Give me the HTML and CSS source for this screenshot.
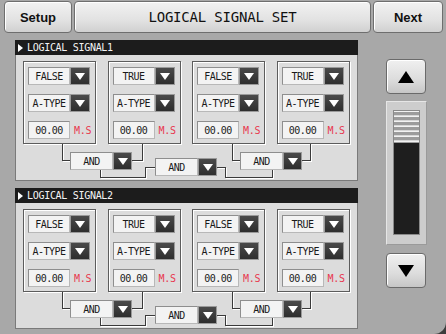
FILE: index.html
```html
<!DOCTYPE html>
<html lang="en">
<head>
    <meta charset="UTF-8">
    <meta name="viewport" content="width=device-width, initial-scale=1.0">
    <title>Logical Signal Set</title>
    <link rel="stylesheet" href="styles.css">
</head>
<body>
    <div id="screen">
        <div class="topbar">
            <button class="side-btn setup">Setup</button>
            <div class="title">LOGICAL SIGNAL SET</div>
            <button class="side-btn next">Next</button>
        </div>

        <div class="main">
            <div class="panels">
                <div class="panel">
                    <div class="panel-head"><span class="arrow"></span>LOGICAL SIGNAL1</div>
                    <div class="panel-body">
                        <div class="cards">
                            <div class="card">
                                <div class="select"><span class="field">FALSE</span><span class="drop"></span></div>
                                <div class="select"><span class="field">A-TYPE</span><span class="drop"></span></div>
                                <div class="time"><span class="field">00.00</span><span class="unit">M.S</span></div>
                            </div>
                            <div class="card">
                                <div class="select"><span class="field">TRUE</span><span class="drop"></span></div>
                                <div class="select"><span class="field">A-TYPE</span><span class="drop"></span></div>
                                <div class="time"><span class="field">00.00</span><span class="unit">M.S</span></div>
                            </div>
                            <div class="card">
                                <div class="select"><span class="field">FALSE</span><span class="drop"></span></div>
                                <div class="select"><span class="field">A-TYPE</span><span class="drop"></span></div>
                                <div class="time"><span class="field">00.00</span><span class="unit">M.S</span></div>
                            </div>
                            <div class="card">
                                <div class="select"><span class="field">TRUE</span><span class="drop"></span></div>
                                <div class="select"><span class="field">A-TYPE</span><span class="drop"></span></div>
                                <div class="time"><span class="field">00.00</span><span class="unit">M.S</span></div>
                            </div>
                        </div>
                        <div class="logic">
                            <svg class="wires" width="342" height="36">
                                <g class="hi">
                                    <path d="M47.5,0 V17.5 H55 M127.5,0 V17.5 H117 M85.5,26 V34.5 H130.5 V24.5 H139 M202,24.5 H210.5 V34.5 H257.5 V26 M217.5,0 V17.5 H225 M295.5,0 V17.5 H287"/>
                                </g>
                                <g class="lo">
                                    <path d="M46.5,0 V16.5 H54 M126.5,0 V16.5 H116 M84.5,26 V33.5 H129.5 V23.5 H139 M201,23.5 H209.5 V33.5 H256.5 V26 M216.5,0 V16.5 H224 M294.5,0 V16.5 H286"/>
                                </g>
                            </svg>
                            <div class="gate g1"><span class="field">AND</span><span class="drop"></span></div>
                            <div class="gate g2"><span class="field">AND</span><span class="drop"></span></div>
                            <div class="gate g3"><span class="field">AND</span><span class="drop"></span></div>
                        </div>
                    </div>
                </div>

                <div class="panel">
                    <div class="panel-head"><span class="arrow"></span>LOGICAL SIGNAL2</div>
                    <div class="panel-body">
                        <div class="cards">
                            <div class="card">
                                <div class="select"><span class="field">FALSE</span><span class="drop"></span></div>
                                <div class="select"><span class="field">A-TYPE</span><span class="drop"></span></div>
                                <div class="time"><span class="field">00.00</span><span class="unit">M.S</span></div>
                            </div>
                            <div class="card">
                                <div class="select"><span class="field">TRUE</span><span class="drop"></span></div>
                                <div class="select"><span class="field">A-TYPE</span><span class="drop"></span></div>
                                <div class="time"><span class="field">00.00</span><span class="unit">M.S</span></div>
                            </div>
                            <div class="card">
                                <div class="select"><span class="field">FALSE</span><span class="drop"></span></div>
                                <div class="select"><span class="field">A-TYPE</span><span class="drop"></span></div>
                                <div class="time"><span class="field">00.00</span><span class="unit">M.S</span></div>
                            </div>
                            <div class="card">
                                <div class="select"><span class="field">TRUE</span><span class="drop"></span></div>
                                <div class="select"><span class="field">A-TYPE</span><span class="drop"></span></div>
                                <div class="time"><span class="field">00.00</span><span class="unit">M.S</span></div>
                            </div>
                        </div>
                        <div class="logic">
                            <svg class="wires" width="342" height="36">
                                <g class="hi">
                                    <path d="M47.5,0 V17.5 H55 M127.5,0 V17.5 H117 M85.5,26 V34.5 H130.5 V24.5 H139 M202,24.5 H210.5 V34.5 H257.5 V26 M217.5,0 V17.5 H225 M295.5,0 V17.5 H287"/>
                                </g>
                                <g class="lo">
                                    <path d="M46.5,0 V16.5 H54 M126.5,0 V16.5 H116 M84.5,26 V33.5 H129.5 V23.5 H139 M201,23.5 H209.5 V33.5 H256.5 V26 M216.5,0 V16.5 H224 M294.5,0 V16.5 H286"/>
                                </g>
                            </svg>
                            <div class="gate g1"><span class="field">AND</span><span class="drop"></span></div>
                            <div class="gate g2"><span class="field">AND</span><span class="drop"></span></div>
                            <div class="gate g3"><span class="field">AND</span><span class="drop"></span></div>
                        </div>
                    </div>
                </div>
            </div>

            <div class="scroll">
                <button class="scroll-btn up"></button>
                <div class="track">
                    <div class="track-inner">
                        <div class="thumb"></div>
                    </div>
                </div>
                <button class="scroll-btn down"></button>
            </div>
        </div>
    </div>
</body>
</html>
```

FILE: styles.css
```css
body {
    margin: 0;
    background-color: #3c3c3c;
    font-family: "DejaVu Sans Mono", monospace;
}

#screen {
    width: 446px;
    height: 334px;
    overflow: hidden;
    background-color: #a8a8a8;
    border-bottom-right-radius: 12px;
}

/* top bar */

.topbar {
    display: flex;
    gap: 2px;
    height: 32px;
    padding: 1px 3px 0 4px;
}

.side-btn,
.title {
    box-sizing: border-box;
    height: 32px;
    border: 1px solid #6e6e6e;
    border-radius: 4px;
    background: linear-gradient(#f2f2f2, #e2e2e2 60%, #d0d0d0);
    box-shadow: inset 1px 1px 0 #ffffff;
    color: #111;
}

.side-btn {
    font-family: "Liberation Sans", Arial, sans-serif;
    font-weight: bold;
    font-size: 13px;
    padding: 0;
}

.setup {
    width: 68px;
}

.next {
    width: 70px;
}

.title {
    flex: 1;
    display: flex;
    align-items: center;
    justify-content: center;
    font-size: 14px;
    letter-spacing: -0.2px;
}

/* main */

.main {
    display: flex;
    margin-top: 7px;
}

.panels {
    margin-left: 15px;
    width: 343px;
    display: flex;
    flex-direction: column;
    gap: 7px;
}

.panel-head {
    height: 15px;
    background-color: #1c1c1c;
    color: #f4f4f4;
    display: flex;
    align-items: center;
    gap: 4px;
    padding-left: 3px;
    font-size: 10px;
    letter-spacing: -0.3px;
}

.arrow {
    width: 0;
    height: 0;
    border-top: 4px solid transparent;
    border-bottom: 4px solid transparent;
    border-left: 5px solid #ffffff;
}

.panel-body {
    background-color: #dcdcdc;
    border: 1px solid #7a7a7a;
    border-top: none;
    padding-top: 6px;
}

.cards {
    display: flex;
    gap: 11.5px;
    padding-left: 7px;
}

.card {
    box-sizing: border-box;
    width: 73px;
    height: 83px;
    border: 1px solid #5c5c5c;
    box-shadow: inset 1px 1px 0 #ffffff, 1px 1px 0 #ffffff;
    padding: 5px 0 0 4px;
    display: flex;
    flex-direction: column;
    gap: 9px;
}

.select,
.time,
.gate {
    display: flex;
    height: 18px;
}

.field {
    box-sizing: border-box;
    width: 42px;
    height: 18px;
    background-color: #f3f3f3;
    border: 1px solid #b8b8b8;
    border-top-color: #8e8e8e;
    border-left-color: #8e8e8e;
    display: flex;
    align-items: center;
    justify-content: center;
    font-size: 10px;
    letter-spacing: -0.5px;
    color: #1a1a1a;
}

.drop {
    box-sizing: border-box;
    width: 20px;
    height: 18px;
    background: linear-gradient(#4a4a4a, #2e2e2e);
    border: 1px solid #9a9a9a;
    display: flex;
    align-items: center;
    justify-content: center;
}

.drop::before {
    content: "";
    width: 0;
    height: 0;
    border-left: 5px solid transparent;
    border-right: 5px solid transparent;
    border-top: 7px solid #ffffff;
}

.unit {
    color: #e8384f;
    font-size: 10px;
    letter-spacing: -0.3px;
    display: flex;
    align-items: center;
    padding-left: 4px;
}

/* and-gates */

.logic {
    position: relative;
    height: 36px;
}

.wires {
    position: absolute;
    left: 0;
    top: 0;
}

.wires path {
    fill: none;
    stroke-width: 1;
    shape-rendering: crispEdges;
}

.wires .hi path {
    stroke: #ffffff;
}

.wires .lo path {
    stroke: #3a3a3a;
}

.gate {
    position: absolute;
}

.gate .field {
    width: 43px;
}

.gate .drop {
    width: 19px;
}

.g1 {
    left: 54px;
    top: 8px;
}

.g2 {
    left: 139px;
    top: 14px;
}

.g3 {
    left: 224px;
    top: 8px;
}

/* scroll column */

.scroll {
    margin-left: 28px;
    width: 41px;
    padding-top: 19px;
    display: flex;
    flex-direction: column;
}

.scroll-btn {
    box-sizing: border-box;
    width: 40px;
    height: 35px;
    padding: 0;
    border: 1px solid #6a6a6a;
    border-radius: 4px;
    background: linear-gradient(#f0f0f0, #dcdcdc 60%, #c6c6c6);
    box-shadow: inset 1px 1px 0 #ffffff;
    display: flex;
    align-items: center;
    justify-content: center;
}

.scroll-btn::before {
    content: "";
    width: 0;
    height: 0;
    border-left: 8px solid transparent;
    border-right: 8px solid transparent;
}

.up::before {
    border-bottom: 12px solid #000000;
}

.down::before {
    border-top: 12px solid #000000;
}

.track {
    box-sizing: border-box;
    width: 41px;
    height: 144px;
    margin: 7px 0 8px;
    background-color: #cdcdcd;
    border: 1px solid #e6e6e6;
    border-right-color: #9a9a9a;
    border-bottom-color: #9a9a9a;
    padding: 8px 0 0 6px;
}

.track-inner {
    box-sizing: border-box;
    width: 27px;
    height: 125px;
    background-color: #1e1e1e;
    border: 1px solid #8a8a8a;
}

.thumb {
    height: 32px;
    background: repeating-linear-gradient(#f2f2f2 0, #f2f2f2 1px, #9c9c9c 1px, #9c9c9c 4px, #d6d6d6 4px, #d6d6d6 5px);
}
```
